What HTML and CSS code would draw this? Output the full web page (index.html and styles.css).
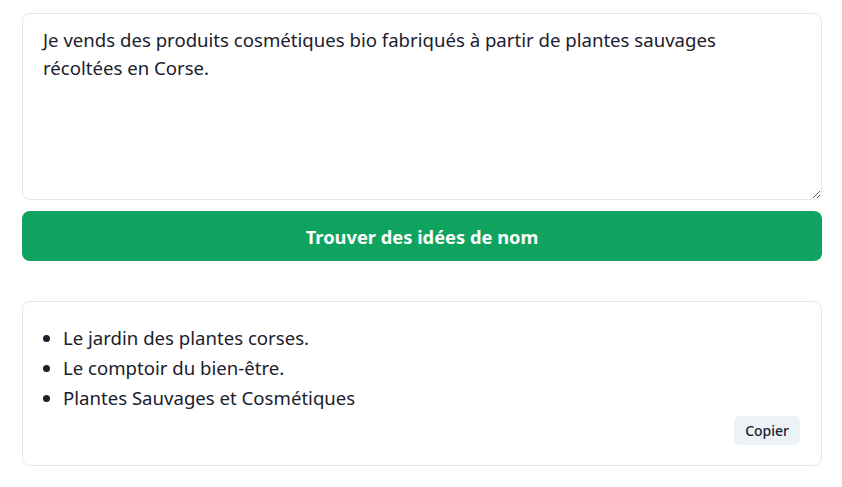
FILE: index.html
```html
<!DOCTYPE html>
<html lang="fr">
<head>
<meta charset="utf-8">
<link rel="stylesheet" href="styles.css">
</head>
<body>
<main class="app">
  <textarea class="prompt">Je vends des produits cosmétiques bio fabriqués à partir de plantes sauvages récoltées en Corse.</textarea>
  <button class="submit">Trouver des idées de nom</button>
  <section class="result">
    <ul class="ideas">
      <li>Le jardin des plantes corses.</li>
      <li>Le comptoir du bien-être.</li>
      <li>Plantes Sauvages et Cosmétiques</li>
    </ul>
    <div class="actions"><button class="copy">Copier</button></div>
  </section>
</main>
</body>
</html>
```
FILE: styles.css
```css
* { box-sizing: border-box; }
html, body { margin: 0; background: #fff; }
body {
  font-family: "Noto Sans", "Open Sans", sans-serif;
  color: #1a202c;
  padding: 13px 20px 0 22px;
}
.app { width: 800px; display: flex; flex-direction: column; }
.prompt {
  display: block;
  width: 800px;
  height: 187px;
  font: inherit;
  font-size: 18.6px;
  line-height: 28px;
  color: #1a202c;
  padding: 12px 60px 12px 20px;
  border: 1px solid #e2e8f0;
  border-radius: 8px;
  resize: vertical;
  outline: none;
}
.submit {
  margin-top: 11px;
  height: 50px;
  width: 800px;
  border: 0;
  border-radius: 8px;
  background: #0ea35e;
  color: #fff;
  font: inherit;
  font-size: 18.3px;
  font-weight: 700;
}
.result {
  margin-top: 40px;
  height: 165px;
  border: 1px solid #e2e8f0;
  border-radius: 8px;
  padding: 21px 20px 20px 20px;
}
.ideas {
  margin: 0;
  padding-left: 20px;
  font-size: 18.6px;
  line-height: 30px;
}
.actions { display: flex; justify-content: flex-end; margin-top: 3px; margin-right: 1px; }
.copy {
  border: 0;
  background: #edf2f7;
  border-radius: 6px;
  height: 29px;
  padding: 0 11px;
  font: inherit;
  font-size: 14px;
  font-weight: 500;
  color: #1a202c;
}
```
